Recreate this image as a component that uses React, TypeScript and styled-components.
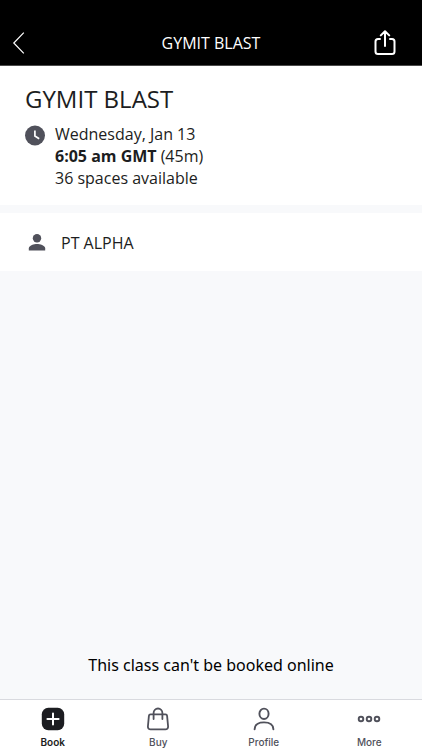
import React from "react";
import styled, { createGlobalStyle } from "styled-components";

const GlobalStyle = createGlobalStyle`
  * { box-sizing: border-box; }
  body { margin: 0; background: #f8f9fb; }
  button { border: 0; background: none; padding: 0; cursor: pointer; }
  svg { display: block; }
`;

const Screen = styled.div`
  display: flex;
  flex-direction: column;
  min-height: 100vh;
  color: #1c1d21;
  background: #f8f9fb;
  font-family: "Open Sans", "Noto Sans", sans-serif;
  font-size: 16px;
  line-height: 22px;
`;

const TopBar = styled.header`
  display: grid;
  grid-template-columns: 64px 1fr 64px;
  align-items: center;
  padding: 20px 4px 0;
  height: 66px;
  color: #fff;
  background: #000;
  border-bottom: 1px solid #4a4a4a;
`;

const BarTitle = styled.h1`
  margin: 0;
  font-size: 16px;
  font-weight: 400;
  text-align: center;
`;

const BarButton = styled.button<{ $end?: boolean }>`
  display: flex;
  align-items: center;
  justify-content: ${(p) => (p.$end ? "flex-end" : "flex-start")};
  height: 44px;
  padding: ${(p) => (p.$end ? "0 22px 0 0" : "0 0 0 8px")};
  color: inherit;
`;

const Summary = styled.section`
  padding: 16px 25px;
  background: #fff;
`;

const ClassName = styled.h2`
  margin: 0 0 7px;
  font-size: 24px;
  font-weight: 400;
  line-height: 34px;
`;

const Schedule = styled.div`
  display: flex;
  gap: 10px;
`;

const ClockSlot = styled.span`
  padding-top: 2px;
  color: #50515b;
`;

const Line = styled.p`
  margin: 0;
  line-height: 22px;
`;

const Duration = styled.span`
  margin-left: 4px;
`;

const Instructor = styled.section`
  display: flex;
  align-items: center;
  gap: 12px;
  margin-top: 8px;
  padding: 19px 24px 17px;
  background: #fff;
`;

const PersonSlot = styled.span`
  color: #50515b;
`;

const Notice = styled.p`
  margin: auto 0 0;
  padding: 16px 16px 23px;
  color: #000;
  font-family: "Noto Sans", "Open Sans", sans-serif;
  text-align: center;
`;

const TabBar = styled.nav`
  display: grid;
  grid-template-columns: repeat(4, 1fr);
  height: 51px;
  background: #fff;
  border-top: 1px solid #d9dadf;
`;

const Tab = styled.button<{ $active?: boolean }>`
  display: flex;
  flex-direction: column;
  align-items: center;
  gap: 4px;
  padding-top: 7px;
  color: ${(p) => (p.$active ? "#1c1d21" : "#50515b")};
  font-family: Inter, sans-serif;
  font-size: 10px;
  font-weight: ${(p) => (p.$active ? 600 : 500)};
  line-height: 14px;
`;

const BackIcon = () => (
  <svg width="14" height="24" viewBox="0 0 14 24" fill="none" stroke="currentColor" strokeWidth="1.2" aria-hidden="true">
    <path d="M11.8 1.7 1.8 12l10 10.3" />
  </svg>
);

const ShareIcon = () => (
  <svg width="22" height="26" viewBox="0 0 22 26" fill="none" stroke="currentColor" strokeWidth="2" strokeLinecap="round" strokeLinejoin="round" aria-hidden="true">
    <path d="M6 9H4a2.500 2.500 0 0 0-2.500 2.500v10A2.500 2.500 0 0 0 4 24h14a2.500 2.500 0 0 0 2.500-2.500v-10A2.500 2.500 0 0 0 18 9h-2M11 16V2M6.800 5.400 11 1.200l4.200 4.200" />
  </svg>
);

const ClockIcon = () => (
  <svg width="20" height="21" viewBox="0 0 20 21" aria-hidden="true">
    <circle cx="10" cy="10.5" r="10" fill="currentColor" />
    <path d="M9.900 5.5v5.600l4.300 2.600" fill="none" stroke="#fff" strokeWidth="1.700" />
  </svg>
);

const PersonIcon = () => (
  <svg width="25" height="22" viewBox="0 0 25 22" fill="currentColor" aria-hidden="true">
    <circle cx="13" cy="6.200" r="4.200" />
    <path d="M4.800 18.400v-2c0-2.800 5.400-4.300 8.200-4.300s8.200 1.500 8.200 4.300v2z" />
  </svg>
);

const BookIcon = () => (
  <svg width="24" height="24" viewBox="0 0 24 24" aria-hidden="true">
    <rect x="0.8" y="0.8" width="22.4" height="22.4" rx="6.5" fill="currentColor" />
    <path d="M12 6.4v11.2M6.4 12h11.2" stroke="#fff" strokeWidth="2" strokeLinecap="round" />
  </svg>
);

const BuyIcon = () => (
  <svg width="24" height="24" viewBox="0 0 24 24" fill="none" stroke="currentColor" strokeWidth="1.8" strokeLinecap="round" strokeLinejoin="round" aria-hidden="true">
    <path d="M4.500 7.400h15c1 0 1.500.6 1.600 1.500l1 10.600c.1 1.700-1 2.900-2.700 2.900H4.600c-1.700 0-2.800-1.200-2.700-2.900L2.900 8.900c.1-.9.6-1.500 1.600-1.500z" />
    <path d="M7.600 12V5.900a4.400 4.400 0 0 1 8.800 0V12" />
  </svg>
);

const ProfileIcon = () => (
  <svg width="24" height="24" viewBox="0 0 24 24" fill="none" stroke="currentColor" strokeWidth="1.9" strokeLinecap="round" aria-hidden="true">
    <ellipse cx="12" cy="6.800" rx="4.600" ry="5.200" />
    <path d="M2.600 22.300c.2-4.800 3.400-6.900 9.400-6.900s9.200 2.100 9.400 6.900" />
  </svg>
);

const MoreIcon = () => (
  <svg width="24" height="24" viewBox="0 0 24 24" fill="none" stroke="currentColor" strokeWidth="1.900" aria-hidden="true">
    <circle cx="4" cy="12" r="2.300" />
    <circle cx="12" cy="12" r="2.300" />
    <circle cx="20" cy="12" r="2.300" />
  </svg>
);

const tabs = [
  { label: "Book", Icon: BookIcon },
  { label: "Buy", Icon: BuyIcon },
  { label: "Profile", Icon: ProfileIcon },
  { label: "More", Icon: MoreIcon },
];

export default function App() {
  return (
    <Screen>
      <GlobalStyle />
      <TopBar>
        <BarButton aria-label="Back"><BackIcon /></BarButton>
        <BarTitle>GYMIT BLAST</BarTitle>
        <BarButton $end aria-label="Share"><ShareIcon /></BarButton>
      </TopBar>
      <Summary>
        <ClassName>GYMIT BLAST</ClassName>
        <Schedule>
          <ClockSlot><ClockIcon /></ClockSlot>
          <div>
            <Line>Wednesday, Jan 13</Line>
            <Line><b>6:05 am GMT</b><Duration>(45m)</Duration></Line>
            <Line>36 spaces available</Line>
          </div>
        </Schedule>
      </Summary>
      <Instructor>
        <PersonSlot><PersonIcon /></PersonSlot>
        <span>PT ALPHA</span>
      </Instructor>
      <Notice>This class can't be booked online</Notice>
      <TabBar aria-label="Main">
        {tabs.map(({ label, Icon }, i) => (
          <Tab key={label} $active={i === 0} aria-current={i === 0 ? "page" : undefined}>
            <Icon />
            {label}
          </Tab>
        ))}
      </TabBar>
    </Screen>
  );
}
